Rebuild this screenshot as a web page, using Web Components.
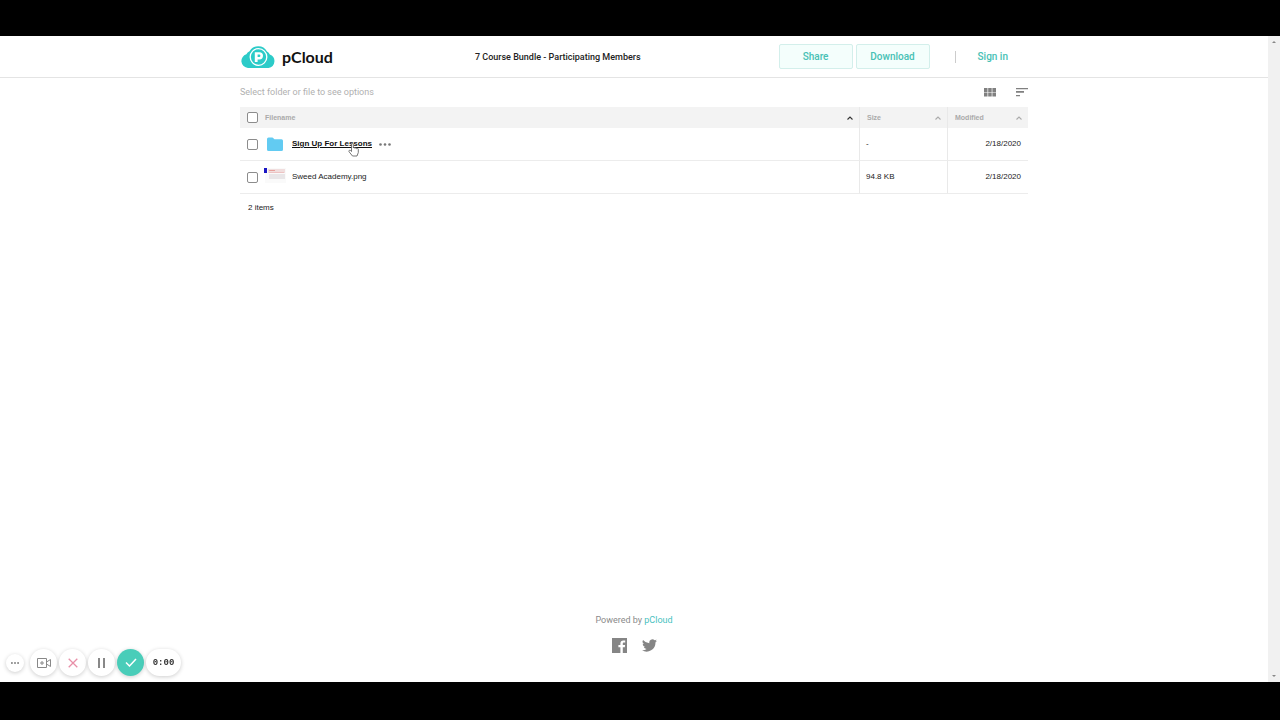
<!DOCTYPE html>
<html lang="en">
<head>
<meta charset="utf-8">
<title>pCloud - 7 Course Bundle</title>
<style>
  body { margin: 0; background: #000; font-family: Roboto, sans-serif; }
</style>
</head>
<body>
<shared-page>
  <site-header slot="header">7 Course Bundle - Participating Members</site-header>
  <view-toolbar>Select folder or file to see options</view-toolbar>
  <file-list></file-list>
  <site-footer slot="footer"></site-footer>
  <recorder-bar slot="overlay"></recorder-bar>
</shared-page>

<script>
const define = (name, html, setup) => customElements.define(name, class extends HTMLElement {
  connectedCallback() {
    if (this.shadowRoot) return;
    this.attachShadow({ mode: 'open' }).innerHTML = html;
    if (setup) setup(this.shadowRoot, this);
  }
});

const ICONS = {
  logo: ['0 0 34 22', '<path fill="#2ccbc8" d="M7 22a7 7 0 0 1-1.600-13.700A5.500 5.500 0 0 1 8.500 5.300A10 10 0 0 1 26 5.500A5.500 5.500 0 0 1 28.800 8.500A7 7 0 0 1 27.500 22z"/><circle cx="17.500" cy="11" r="8.300" fill="none" stroke="#fff" stroke-width="1.300"/><path fill="#fff" fill-rule="evenodd" d="M13.800 6.200h4.600a3.600 3.600 0 0 1 0 7.200h-1.800v2.600h-2.800zM16.600 8.600v2.400h1.600a1.200 1.200 0 0 0 0-2.400z"/>'],
  grid: ['0 0 12 10', '<path fill="#808080" d="M0 1h3.500v4H0zM4.200 1h3.500v4H4.200zM8.400 1H12v4H8.400zM0 5.600h3.500v4H0zM4.200 5.600h3.500v4H4.200zM8.400 5.600H12v4H8.400z"/>'],
  sort: ['0 0 12 10', '<path fill="#808080" d="M0 1h12v1.300H0zM0 4h8v1.700H0zM0 8h4v1.300H0z"/>'],
  folder: ['0 0 16 14', '<path fill="#62cbf2" d="M1.500.5h4l2 1.700h7A1.500 1.500 0 0 1 16 3.700v8.800a1.500 1.500 0 0 1-1.500 1.500h-13A1.500 1.500 0 0 1 0 12.500V2A1.500 1.500 0 0 1 1.500.5z"/>'],
  shot: ['0 0 22 18', '<path fill="#fafafa" d="M1 0h21v15H1z"/><path fill="#1a16c4" d="M0 0h3v5H0z"/><path fill="#f1dede" d="M4 1h17v4H4z"/><path fill="#e7a09c" d="M5 2h6v1H5z"/><path fill="#edc3c3" d="M5 4h15v1H5z"/><path fill="#e9e6e8" d="M5 6h16v5H5z"/>'],
  caret: ['0 0 6 4', '<path fill="none" stroke="currentColor" stroke-width="1.100" d="M.5 3.500 3 1l2.500 2.500"/>'],
  dots: ['0 0 12 3', '<g fill="#777"><circle cx="1.500" cy="1.500" r="1.300"/><circle cx="6" cy="1.500" r="1.300"/><circle cx="10.500" cy="1.500" r="1.300"/></g>'],
  hand: ['0 0 11 14', '<path fill="#fff" stroke="#555" stroke-width=".8" stroke-linejoin="round" d="M3.500 8.500V1.500a.9.9 0 0 1 1.800 0V5a.9.9 0 0 1 1.700.3.900.9 0 0 1 1.700.4.900.9 0 0 1 1.600.6v3.200L9 13H4.500L1 8.700C.4 7.500 1.800 6.800 2.500 7.500z"/>'],
  facebook: ['0 0 15 15', '<path fill="#858585" d="M0 0h15v15h-4.200V9.300h2l.3-2.300h-2.300V5.700c0-.7.2-1.100 1.100-1.100h1.300V2.500L11.400 2.400C9.500 2.400 8.400 3.500 8.400 5.400V7H6.400v2.300h2V15H0z"/>'],
  twitter: ['0 0 24 20', '<path fill="#858585" d="M24 2.400a10 10 0 0 1-2.800.8A5 5 0 0 0 23.300.5a10 10 0 0 1-3.100 1.200 4.900 4.900 0 0 0-8.400 4.500A14 14 0 0 1 1.700 1a4.900 4.900 0 0 0 1.500 6.600A5 5 0 0 1 1 7a4.900 4.900 0 0 0 3.900 4.900 5 5 0 0 1-2.200.1 4.900 4.900 0 0 0 4.600 3.400A10 10 0 0 1 0 17.500 14 14 0 0 0 21.500 5z"/>'],
  more: ['0 0 8 2', '<path fill="#777" d="M0 .2h1.800v1.500H0zM3.100.2h1.800v1.500H3.100zM6.200.2H8v1.500H6.200z"/>'],
  camera: ['0 0 14 10', '<path fill="none" stroke="#888" d="M.5.5h9v9h-9zM9.500 4l4-2.500v7L9.500 6M5 3v4M3 5h4"/>'],
  cross: ['0 0 10 10', '<path stroke="#e88fa8" stroke-width="1.300" d="m.7.7 8.600 8.600M9.300.7.7 9.300"/>'],
  pause: ['0 0 7 10', '<path fill="#888" d="M0 0h2v10H0zM5 0h2v10H5z"/>'],
  check: ['0 0 12 9', '<path fill="none" stroke="#fff" stroke-width="1.500" d="M1 4.500 4.500 8 11 1"/>'],
  up: ['0 0 4 2', '<path fill="#888" d="M0 2l2-2 2 2z"/>'],
  down: ['0 0 4 2', '<path fill="#888" d="M0 0l2 2 2-2z"/>']
};

customElements.define('ui-icon', class extends HTMLElement {
  connectedCallback() {
    if (this.shadowRoot) return;
    const [box, body] = ICONS[this.getAttribute('name')];
    this.attachShadow({ mode: 'open' }).innerHTML =
      `<style>:host{display:block;flex:none}svg{display:block;width:100%;height:100%}</style>
       <svg viewBox="${box}" aria-hidden="true">${body}</svg>`;
  }
});

define('shared-page', `
<style>
  :host { display: flex; flex-direction: column; min-height: 100vh; box-sizing: border-box;
          padding: 36px 0 38px; background: #000; }
  .view { flex: 1; display: flex; background: #fff; }
  .doc { flex: 1; display: flex; flex-direction: column; min-width: 0; }
  main { flex: 1; width: 100%; max-width: 788px; margin: 0 auto; }
  .track { width: 12px; background: #f1f1f1; display: flex; flex-direction: column; align-items: center;
           justify-content: space-between; padding: 5px 0; box-sizing: border-box; }
  .track ui-icon { width: 4px; height: 2px; }
</style>
<div class="view">
  <div class="doc"><slot name="header"></slot><main><slot></slot></main><slot name="footer"></slot></div>
  <div class="track"><ui-icon name="up"></ui-icon><ui-icon name="down"></ui-icon></div>
</div>
<slot name="overlay"></slot>`);

define('site-header', `
<style>
  :host { display: block; border-bottom: 1px solid #e4e4e4; }
  .bar { display: flex; align-items: center; max-width: 788px; height: 41px; margin: 0 auto; }
  .brand { display: flex; align-items: center; gap: 7px; width: 97px; color: #111; text-decoration: none;
           font: 700 16px/20px Lato, sans-serif; }
  .brand ui-icon { width: 34px; height: 22px; margin-left: 1px; }
  h1 { flex: 1; margin: 0; text-align: center; font-size: 9px; line-height: 12px; font-weight: 500; color: #222; }
  .actions { display: flex; gap: 3px; }
  button { width: 74px; height: 25px; padding: 0; border: 1px solid #d3efeb; border-radius: 2px; background: #f4fefc;
           color: #48c1b5; font: 500 10px/12px Roboto, sans-serif; }
  .sign { display: flex; align-items: center; margin-left: 25px; padding-right: 20px; }
  .sign::before { content: ""; width: 1px; height: 12px; background: #ccc; margin-right: 22px; }
  .sign a { color: #48c1b5; font-size: 10px; line-height: 12px; font-weight: 500; text-decoration: none; }
</style>
<header class="bar">
  <a class="brand" href="#"><ui-icon name="logo"></ui-icon>pCloud</a>
  <h1><slot></slot></h1>
  <div class="actions"><button type="button">Share</button><button type="button">Download</button></div>
  <div class="sign"><a href="#">Sign in</a></div>
</header>`);

define('view-toolbar', `
<style>
  :host { display: flex; align-items: center; height: 29px; padding-bottom: 2px; box-sizing: border-box;
          color: #b0b0b0; font-size: 9px; line-height: 12px; }
  span { flex: 1; }
  button { border: 0; padding: 0; background: none; margin-left: 20px; }
  ui-icon { width: 12px; height: 10px; }
</style>
<span><slot></slot></span>
<button type="button" aria-label="Grid view"><ui-icon name="grid"></ui-icon></button>
<button type="button" aria-label="Sort"><ui-icon name="sort"></ui-icon></button>`);

const FILES = [
  { name: 'Sign Up For Lessons', icon: 'folder', size: '-', date: '2/18/2020', active: true },
  { name: 'Sweed Academy.png', icon: 'shot', size: '94.8 KB', date: '2/18/2020' }
];

define('file-list', `
<style>
  :host { display: block; font: 8px/10px "Liberation Sans", Arial, sans-serif; color: #222; }
  table { width: 100%; border-collapse: separate; border-spacing: 0; table-layout: fixed; }
  .size { width: 88px; } .date { width: 81px; }
  th { height: 21px; padding: 0 6px 0 7px; background: #f3f3f3; color: #aaa; text-align: left; font-size: 7px; font-weight: 700; box-sizing: border-box; }
  th + th, td + td { border-left: 1px solid #e9e9e9; }
  td { height: 33px; padding: 0 7px; border-bottom: 1px solid #ececec; box-sizing: border-box; }
  td + td { padding-left: 6px; }
  td:last-child { text-align: right; }
  .line { display: flex; align-items: center; }
  .grow { flex: 1; }
  th .line ui-icon { width: 6px; height: 4px; }
  .lead { color: #333; }
  input { appearance: none; flex: none; width: 11px; height: 11px; margin: 0; border: 1px solid #8c8c8c; border-radius: 2px; background: #fff; }
  th input { margin-right: 7px; }
  .pic { width: 22px; display: flex; justify-content: center; margin: 0 6px; }
  .folder { width: 16px; height: 14px; }
  .shot { width: 22px; height: 18px; }
  label, a { color: inherit; }
  a { text-decoration: none; }
  .active a { font-weight: 700; text-decoration: underline; color: #111; }
  .name { position: relative; }
  .hand { position: absolute; left: 56px; top: 4px; width: 11px; height: 14px; }
  .menu { border: 0; padding: 0; margin-left: 7px; background: none; }
  .dots { width: 12px; height: 3px; }
  p { margin: 9px 8px; }
</style>
<table>
  <colgroup><col><col class="size"><col class="date"></colgroup>
  <thead><tr>
    <th><div class="line"><input type="checkbox" id="all"><label for="all" class="grow">Filename</label><ui-icon class="lead" name="caret"></ui-icon></div></th>
    <th><div class="line"><span class="grow">Size</span><ui-icon name="caret"></ui-icon></div></th>
    <th><div class="line"><span class="grow">Modified</span><ui-icon name="caret"></ui-icon></div></th>
  </tr></thead>
  <tbody></tbody>
</table>
<p>2 items</p>`, root => {
  root.querySelector('tbody').innerHTML = FILES.map(f => `
    <tr class="${f.active ? 'active' : ''}">
      <td><div class="line"><input type="checkbox" aria-label="${f.name}">
        <span class="pic"><ui-icon class="${f.icon}" name="${f.icon}"></ui-icon></span>
        <span class="name"><a href="#">${f.name}</a>${f.active ? '<ui-icon class="hand" name="hand"></ui-icon>' : ''}</span>
        ${f.active ? '<button class="menu" type="button" aria-label="More"><ui-icon class="dots" name="dots"></ui-icon></button>' : ''}
      </div></td><td>${f.size}</td><td>${f.date}</td></tr>`).join('');
});

define('site-footer', `
<style>
  :host { display: flex; flex-direction: column; align-items: center; gap: 12px; padding-bottom: 29px;
          color: #8a8a8a; font-size: 9px; line-height: 12px; }
  p { margin: 0; }
  p a { color: #48c1c0; text-decoration: none; }
  nav { display: flex; gap: 15px; }
  nav ui-icon { width: 15px; height: 15px; }
</style>
<p>Powered by <a href="#">pCloud</a></p>
<nav><a href="#" aria-label="Facebook"><ui-icon name="facebook"></ui-icon></a><a href="#" aria-label="Twitter"><ui-icon name="twitter"></ui-icon></a></nav>`);

define('recorder-bar', `
<style>
  :host { position: fixed; left: 6px; bottom: 44px; display: flex; align-items: center; gap: 2px; }
  button, time { display: flex; align-items: center; justify-content: center; box-sizing: border-box; width: 27px; height: 27px;
           padding: 0; border: 0; border-radius: 14px; background: #fff; box-shadow: 0 1px 4px rgba(0,0,0,.2); }
  .small { width: 18px; height: 18px; margin-right: 4px; }
  .done { background: #49cdb9; }
  time { width: 35px; color: #333; font: 700 9px/12px "Liberation Mono", monospace; }
  .more { width: 8px; height: 2px; } .camera { width: 14px; height: 10px; }
  .cross { width: 10px; height: 10px; } .pause { width: 7px; height: 10px; } .check { width: 12px; height: 9px; }
</style>
<button class="small" type="button" aria-label="More"><ui-icon class="more" name="more"></ui-icon></button>
<button type="button" aria-label="Camera"><ui-icon class="camera" name="camera"></ui-icon></button>
<button type="button" aria-label="Cancel"><ui-icon class="cross" name="cross"></ui-icon></button>
<button type="button" aria-label="Pause"><ui-icon class="pause" name="pause"></ui-icon></button>
<button class="done" type="button" aria-label="Finish"><ui-icon class="check" name="check"></ui-icon></button>
<time>0:00</time>`);
</script>
</body>
</html>
